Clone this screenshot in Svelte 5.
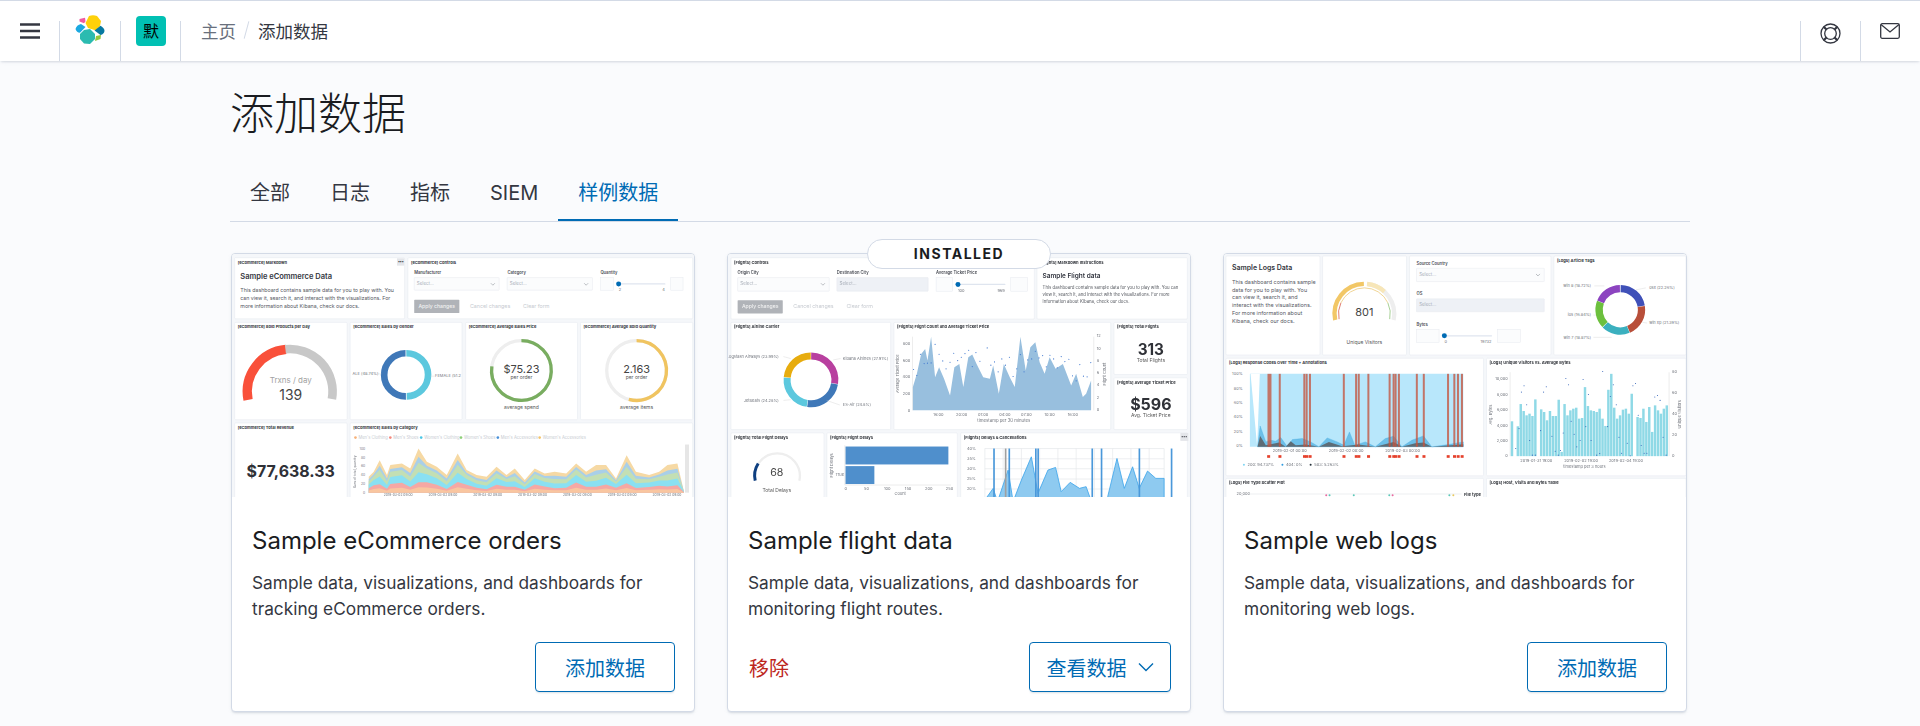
<script>
  const tabs = ['全部', '日志', '指标', 'SIEM', '样例数据'];

  // arc path, angles in degrees clockwise from 12 o'clock
  function arc(cx, cy, r, a0, a1) {
    const p = (a) => {
      const t = ((a - 90) * Math.PI) / 180;
      return `${(cx + r * Math.cos(t)).toFixed(1)} ${(cy + r * Math.sin(t)).toFixed(1)}`;
    };
    return `M${p(a0)}A${r} ${r} 0 ${a1 - a0 > 180 ? 1 : 0} 1 ${p(a1)}`;
  }

  const pts = (list) => list.map((p) => p.join(',')).join(' ');

  // sales by category chart on the ecommerce card
  const salesTop = [[445,950],[460,935],[478,900],[500,945],[510,915],[545,910],[570,925],[595,865],[620,905],[650,920],[680,945],[713,880],[740,930],[770,945],[800,950],[830,920],[860,945],[885,925],[915,960],[945,925],[975,940],[1005,935],[1040,940],[1070,910],[1100,935],[1130,915],[1160,915],[1190,955],[1222,885],[1250,935],[1290,945],[1320,935],[1345,915],[1375,910],[1395,995]];
  const salesBase = 998;
  const layer = (frac, wob) => salesTop.map(([x, y], i) => [x, salesBase - (salesBase - y) * Math.min(1, frac + wob * Math.sin(i * 1.7))]);
  const stacked = (f) => pts([[445, salesBase], ...layer(f[0], f[1]), [1395, salesBase]]);

  const flightArea = [[578,540],[578,470],[590,430],[603,370],[615,355],[622,390],[633,318],[645,440],[657,410],[672,445],[690,495],[703,410],[718,400],[730,470],[745,380],[757,372],[770,400],[790,440],[810,445],[820,405],[837,490],[852,400],[870,440],[885,470],[902,318],[918,420],[932,350],[947,335],[960,395],[975,430],[990,380],[1008,415],[1030,400],[1055,465],[1070,430],[1090,500],[1100,490],[1115,450],[1115,540]];
  const flightDots = [[580,417],[590,435],[601,371],[612,399],[622,398],[633,397],[645,341],[657,371],[668,391],[678,415],[690,395],[701,368],[713,390],[724,380],[735,369],[746,359],[757,408],[768,366],[780,392],[802,352],[813,404],[824,394],[835,424],[846,385],[857,404],[869,380],[880,438],[891,415],[902,372],[913,424],[924,388],[936,385],[947,362],[958,382],[969,375],[980,409],[991,374],[1002,385],[1013,412],[1025,378],[1036,393],[1048,386],[1059,436],[1070,451],[1081,402],[1092,437],[1103,439],[1114,396]];

  const delayArea = [[795,810],[820,775],[833,815],[865,720],[880,815],[905,750],[935,680],[955,790],[985,720],[1008,712],[1025,785],[1052,757],[1080,775],[1100,770],[1118,820],[1145,820],[1165,800],[1193,685],[1215,775],[1240,710],[1260,775],[1285,723],[1310,745],[1335,745],[1335,820]];
  const delayBars = [822, 868, 948, 955, 1118, 1146, 1260, 1357];

  const logBars = [528,0,543,476,497,510,505,512,462,633,492,500,525,497,512,512,463,620,476,510,495,490,487,520,518,425,482,495,497,500,490,520,542,433,385,487,520,510,493,490,505,445,0,515,518,490,530,485,560,480,495,505,490,480];
  const logDots = [[903,610],[913,550],[920,440],[928,421],[936,478],[945,586],[953,630],[962,630],[978,556],[987,440],[995,424],[1012,573],[1022,618],[1031,630],[1038,616],[1046,563],[1054,399],[1062,418],[1070,528],[1079,567],[1087,605],[1097,586],[1106,402],[1114,544],[1122,447],[1130,586],[1147,630],[1156,625],[1165,378],[1180,544],[1188,453],[1197,418],[1206,478],[1214,576],[1222,624],[1239,594],[1248,632],[1256,421],[1264,414],[1272,510],[1281,601],[1290,624],[1298,624],[1322,455],[1330,450],[1338,465],[1347,576],[1356,630]];
  const redBars = [158,192,266,273,283,385,422,430,459,523,535,541,551,605,626,699,718,729,741];
</script>

{#snippet panel(x, y, x2, y2, title)}
  <rect class="panel" x={x} y={y} width={x2 - x} height={y2 - y} rx="3" />
  {#if title}<text class="pt" x={x + 9} y={y + 18}>{title}</text>{/if}
{/snippet}

{#snippet select(x, y, x2, y2, off)}
  <rect class={off ? 'sel off' : 'sel'} x={x} y={y} width={x2 - x} height={y2 - y} rx="1" />
  <text class="ph" x={x + 8} y={y + 23}>Select...</text>
  {#if !off}<path class="chev" d="M{x2 - 25} {y + 17}l6 6 6-6" />{/if}
{/snippet}

{#snippet slider(a, b, y, h, lo, hi, tx, tx2)}
  <rect class="sel" x={a} y={y} width={tx - a - 8} height={h} />
  <rect class="sel" x={tx2 + 16} y={y} width={b - tx2 - 16} height={h} />
  <rect class="track" x={tx} y={y + h / 2 - 2} width={tx2 - tx} height="4" rx="2" />
  <circle class="thumb" cx={tx + 8} cy={y + h / 2} r="7.5" />
  <text class="sm" x={tx + 8} y={y + h + 3}>{lo}</text>
  <text class="sm" x={tx2 - 2} y={y + h + 3} text-anchor="end">{hi}</text>
{/snippet}

{#snippet formBtns(x, y)}
  <rect class="apply" x={x} y={y} width="136" height="40" rx="2" />
  <text class="applyt" x={x + 68} y={y + 25} text-anchor="middle">Apply changes</text>
  <text class="ghost" x={x + 168} y={y + 25}>Cancel changes</text>
  <text class="ghost" x={x + 328} y={y + 25}>Clear form</text>
{/snippet}

<div class="page">
  <header class="topbar">
    <div class="cell menu">
      <svg width="20" height="16" viewBox="0 0 20 16"><path d="M0 1.500h20M0 8h20M0 14.500h20" stroke="#343741" stroke-width="2.400" /></svg>
    </div>
    <div class="cell logo">
      <svg width="32" height="32" viewBox="0 0 32 32">
        <path d="M10.500 9 L14 2 Q18 0.500 22 2 L26 7 L25 12 L21 16.500 L13 14 Z" fill="#fed10a" />
        <path d="M5 20 L9 16 L15 15 L20 20 L20 25 L15 30 L9 29.500 L5 25 Z" fill="#2bbbb0" />
        <path d="M19.500 16.500 L25.500 11.700 Q29.500 14 29.500 17 Q29 20 25.500 21 Z" fill="#0779a1" />
        <path d="M0.500 15 Q1.500 11 6 10 L10.500 13 L5 18.800 Q1.500 18.500 0.500 15 Z" fill="#1ba9e1" />
        <path d="M4.500 5 L10 3.700 L10.500 7.500 L9 9.300 L4.500 7.500 Z" fill="#ef5ba1" />
        <path d="M21 22 L26 21 L25.500 25 L20 27 Z" fill="#93c83e" />
      </svg>
    </div>
    <div class="cell space"><span class="avatar">默</span></div>
    <nav class="crumbs">
      <span class="crumb">主页</span>
      <span class="slash"></span>
      <span class="current">添加数据</span>
    </nav>
    <div class="cell right">
      <svg width="21" height="21" viewBox="0 0 21 21" fill="none" stroke="#343741">
        <circle cx="10.500" cy="10.500" r="9.500" stroke-width="1.300" />
        <circle cx="10.500" cy="10.500" r="5.800" stroke-width="1.300" />
        <path d="M3.700 3.700l3 3M17.300 3.700l-3 3M3.700 17.300l3-3M17.300 17.300l-3-3" stroke-width="2.200" />
      </svg>
    </div>
    <div class="cell right">
      <svg width="20" height="16" viewBox="0 0 20 16" fill="none" stroke="#343741" stroke-width="1.300">
        <rect x="0.700" y="0.700" width="18.600" height="14.600" rx="1.500" />
        <path d="M1 1.500l9 7.500 9-7.500" />
      </svg>
    </div>
  </header>

  <main class="content">
    <h1>添加数据</h1>
    <div class="tabs">
      {#each tabs as tab, i}
        <span class="tab" class:active={i === 4}>{tab}</span>
      {/each}
    </div>

    <div class="cards">
      <article class="card">
        <svg class="thumb-img" viewBox="33 279 1392 732">
          <rect x="33" y="279" width="1392" height="732" fill="#f5f7fa" />
          {@render panel(41, 290, 553, 474, '[eCommerce] Markdown')}
          <rect x="530" y="292" width="22" height="22" fill="#e4e6ea" />
          <text class="pt" x="533" y="305">•••</text>
          <text class="h3" x="58" y="355">Sample eCommerce Data</text>
          <text class="md" x="58" y="393">This dashboard contains sample data for you to play with. You</text>
          <text class="md" x="58" y="417">can view it, search it, and interact with the visualizations. For</text>
          <text class="md" x="58" y="441">more information about Kibana, check our docs.</text>

          {@render panel(563, 290, 1421, 474, '[eCommerce] Controls')}
          <text class="lb" x="582" y="339">Manufacturer</text>
          <text class="lb" x="863" y="339">Category</text>
          <text class="lb" x="1143" y="339">Quantity</text>
          {@render select(582, 350, 838, 388, false)}
          {@render select(862, 350, 1119, 388, false)}
          {@render slider(1144, 1392, 350, 38, '2', '4', 1190, 1339)}
          {@render formBtns(582, 417)}

          {@render panel(41, 485, 380, 778, '[eCommerce] Sold Products per Day')}
          <path d={arc(207, 694, 128, 259, 355)} fill="none" stroke="#f9503a" stroke-width="28" />
          <path d="M194 566 A128 128 0 0 1 334 716" fill="none" stroke="#c8c8c8" stroke-width="26" />
          <text class="mid" x="210" y="667" text-anchor="middle" font-size="24" fill="#a2a2a2">Trxns / day</text>
          <text class="mid" x="210" y="718" text-anchor="middle" font-size="42" fill="#444">139</text>

          {@render panel(389, 485, 726, 778, '[eCommerce] Sales by Gender')}
          <path d={arc(557, 643, 65, 180, 359)} fill="none" stroke="#3f78b8" stroke-width="20" />
          <path d={arc(557, 643, 65, 1, 178)} fill="none" stroke="#5cc8de" stroke-width="20" />
          <text class="sm" x="396" y="643">ALE (48.74%)</text>
          <path class="lead" d="M470 640h14M630 647h14" />
          <text class="sm" x="645" y="650">FEMALE (51.2</text>

          {@render panel(737, 485, 1074, 778, '[eCommerce] Average Sales Price')}
          <circle cx="905" cy="630" r="90" fill="none" stroke="#eeeeee" stroke-width="10" />
          <path d={arc(905, 630, 90, 0, 278)} fill="none" stroke="#79ad60" stroke-width="10" />
          <text class="mid" x="905" y="637" text-anchor="middle" font-size="33" fill="#444">$75.23</text>
          <text class="mid" x="905" y="656" text-anchor="middle" font-size="15" fill="#555">per order</text>
          <text class="mid" x="905" y="746" text-anchor="middle" font-size="15" fill="#555">average spend</text>

          {@render panel(1083, 485, 1421, 778, '[eCommerce] Average Sold Quantity')}
          <circle cx="1252" cy="630" r="90" fill="none" stroke="#eeeeee" stroke-width="10" />
          <path d={arc(1252, 630, 90, 0, 195)} fill="none" stroke="#f0c460" stroke-width="10" />
          <text class="mid" x="1252" y="637" text-anchor="middle" font-size="33" fill="#444">2.163</text>
          <text class="mid" x="1252" y="656" text-anchor="middle" font-size="15" fill="#555">per order</text>
          <text class="mid" x="1252" y="746" text-anchor="middle" font-size="15" fill="#555">average items</text>

          {@render panel(41, 788, 380, 1030, '[eCommerce] Total Revenue')}
          <text class="big" x="210" y="950" text-anchor="middle" font-size="48">$77,638.33</text>

          {@render panel(389, 788, 1421, 1030, '[eCommerce] Sales by Category')}
          {#each [[405, "Men's Clothing", '#f7b27a'], [510, "Men's Shoes", '#f58a80'], [603, "Women's Clothing", '#4cc7e6'], [723, "Women's Shoes", '#8ed07a'], [834, "Men's Accessories", '#4a90d8'], [960, "Women's Accessories", '#f4c46c']] as [x, name, c]}
            <circle cx={x} cy="832" r="4" fill={c} />
            <text class="legend" x={x + 9} y="836">{name}</text>
          {/each}
          {#each ['100', '80', '60', '40', '20', '0'] as v, i}
            <text class="sm tiny" x="434" y={869 + i * 26.500} text-anchor="end">{v}</text>
          {/each}
          <text class="sm tiny" transform="translate(406 985) rotate(-90)">Sum of total_quantity</text>
          <polygon points={stacked([1, 0])} fill="#f6d9a4" />
          <polygon points={stacked([0.84, 0.04])} fill="#a9cfe8" />
          <polygon points={stacked([0.72, 0.07])} fill="#c3dfb4" />
          <polygon points={stacked([0.52, 0.09])} fill="#8ae0f2" />
          <polygon points={stacked([0.28, 0.07])} fill="#f5a8a4" />
          <polygon points={stacked([0.14, 0.03])} fill="#f9c6a0" />
          <rect x="1398" y="853" width="12" height="145" fill="#e6e6e6" />
          {#each [490, 625, 760, 895, 1030, 1165, 1300] as x}
            <text class="sm tiny" x={x} y="1009">2019-03-02 09:00</text>
          {/each}
        </svg>
        <div class="body">
          <h2>Sample eCommerce orders</h2>
          <p>Sample data, visualizations, and dashboards for tracking eCommerce orders.</p>
        </div>
        <div class="actions">
          <button class="btn wide">添加数据</button>
        </div>
      </article>

      <article class="card">
        <span class="badge">INSTALLED</span>
        <svg class="thumb-img" viewBox="21 69 1392 732">
          <rect x="21" y="69" width="1392" height="732" fill="#f5f7fa" />
          {@render panel(30, 80, 944, 265, '[Flights] Controls')}
          <text class="lb" x="50" y="130">Origin City</text>
          <text class="lb" x="349" y="130">Destination City</text>
          <text class="lb" x="648" y="130">Average Ticket Price</text>
          {@render select(50, 140, 326, 181, false)}
          {@render select(349, 140, 624, 181, true)}
          {@render slider(648, 923, 140, 41, '100', '969', 706, 857)}
          {@render formBtns(50, 208)}

          {@render panel(952, 80, 1405, 265, '')}
          <text class="pt" x="961" y="99">[Flights] Markdown Instructions</text>
          <text class="h3 flights" x="969" y="142">Sample Flight data</text>
          <text class="md flights" x="969" y="175">This dashboard contains sample data for you to play with. You can</text>
          <text class="md flights" x="969" y="195">view it, search it, and interact with the visualizations. For more</text>
          <text class="md flights" x="969" y="216">information about Kibana, check our docs.</text>

          {@render panel(30, 275, 511, 598, '[Flights] Airline Carrier')}
          <path d={arc(271, 448, 72, 0.5, 99)} fill="none" stroke="#b8409f" stroke-width="21" />
          <path d={arc(271, 448, 72, 100, 188)} fill="none" stroke="#3f78b8" stroke-width="21" />
          <path d={arc(271, 448, 72, 189, 275)} fill="none" stroke="#5cc8de" stroke-width="21" />
          <path d={arc(271, 448, 72, 276, 359.500)} fill="none" stroke="#e7ac0e" stroke-width="21" />
          <path class="lead" d="M338 388l22-4M210 384l-22-6M210 508l-22 2M318 510l40 14" />
          <text class="sm" x="174" y="382" text-anchor="end">Logstash Airways (23.99%)</text>
          <text class="sm" x="367" y="388">Kibana Airlines (27.91%)</text>
          <text class="sm" x="174" y="514" text-anchor="end">JetBeats (24.28%)</text>
          <text class="sm" x="367" y="528">ES-Air (24.8%)</text>

          {@render panel(521, 275, 1174, 598, '[Flights] Flight Count and Average Ticket Price')}
          {#each [['800', 341], ['600', 391], ['400', 441], ['200', 491], ['0', 541]] as [v, y]}
            <text class="sm" x="570" y={y + 3} text-anchor="end">{v}</text>
          {/each}
          {#each [['12', 319], ['10', 357], ['8', 394], ['6', 431], ['4', 468], ['2', 505], ['0', 543]] as [v, y]}
            <text class="sm" x="1132" y={y}>{v}</text>
          {/each}
          <text class="sm" transform="translate(537 488) rotate(-90)">Average Ticket Price</text>
          <text class="sm" transform="translate(1161 465) rotate(-90)">Flight Count</text>
          <path class="lead" d="M577 318v222M1123 318v222" stroke-width="2" />
          <polygon points={pts(flightArea)} fill="#98bfde" />
          {#each flightDots as [x, y]}
            <circle cx={x} cy={y} r="1.800" fill="#4178d0" />
          {/each}
          {#each [[655, '16:00'], [725, '20:00'], [790, '01:00'], [855, '04:00'], [920, '07:00'], [990, '10:00'], [1060, '16:00']] as [x, v]}
            <text class="sm" x={x} y="556" text-anchor="middle">{v}</text>
          {/each}
          <text class="sm wide-label" x="852" y="575" text-anchor="middle">timestamp per 30 minutes</text>

          {@render panel(1184, 275, 1405, 432, '[Flights] Total Flights')}
          <text class="big" x="1295" y="374" text-anchor="middle" font-size="46">313</text>
          <text class="mid" x="1295" y="394" text-anchor="middle" font-size="15" fill="#555">Total Flights</text>
          {@render panel(1184, 442, 1405, 598, '[Flights] Average Ticket Price')}
          <text class="big" x="1295" y="540" text-anchor="middle" font-size="48">$596</text>
          <text class="mid" x="1295" y="560" text-anchor="middle" font-size="15" fill="#555">Avg. Ticket Price</text>

          {@render panel(30, 608, 310, 820, '[Flights] Total Flight Delays')}
          <path d="M103 752 A68 68 0 1 1 236 752" fill="none" stroke="#eeeeee" stroke-width="7" />
          <path d="M103 752 A68 68 0 0 1 112 700" fill="none" stroke="#0e3f80" stroke-width="9" />
          <text class="mid" x="168" y="738" text-anchor="middle" font-size="32" fill="#444">68</text>
          <text class="mid" x="168" y="786" text-anchor="middle" font-size="15" fill="#555">Total Delays</text>

          {@render panel(319, 608, 712, 820, '[Flights] Flight Delays')}
          <rect x="375" y="649" width="310" height="54" fill="#4f8fcc" />
          <rect x="375" y="708" width="87" height="54" fill="#4f8fcc" />
          <path class="lead" d="M373 645v120h320" />
          <text class="sm" transform="translate(336 742) rotate(-90)">Flight Delays</text>
          <text class="sm" x="345" y="738">True</text>
          {#each [0, 50, 100, 150, 200, 250] as v, i}
            <text class="sm" x={376 + i * 62.500} y="780" text-anchor="middle">{v}</text>
          {/each}
          <text class="sm" x="540" y="796" text-anchor="middle">Count</text>

          {@render panel(722, 608, 1405, 820, '[Flights] Delays & Cancellations')}
          <rect x="1384" y="608" width="24" height="24" fill="#e4e6ea" />
          <text class="pt" x="1387" y="622">•••</text>
          {#each [['40%', 655], ['35%', 686], ['30%', 716], ['25%', 747], ['20%', 777]] as [v, y]}
            <text class="sm" x="741" y={y + 4}>{v}</text>
            <path class="grid" d="M795 {y}H1335" />
          {/each}
          {#each [795, 850, 905, 960, 1015, 1070, 1125, 1180, 1235, 1290, 1335] as x}
            <path class="grid" d="M{x} 655V810" />
          {/each}
          <polygon points={pts(delayArea)} fill="#8ecaf0" stroke="#3fa6ea" stroke-width="2.500" />
          <rect x="855" y="655" width="5" height="160" fill="#a0a0a0" />
          {#each delayBars as x}
            <rect x={x - 2} y="655" width="5" height="160" fill="#4a98da" />
          {/each}
        </svg>
        <div class="body">
          <h2>Sample flight data</h2>
          <p>Sample data, visualizations, and dashboards for monitoring flight routes.</p>
        </div>
        <div class="actions">
          <span class="remove">移除</span>
          <button class="btn">查看数据
            <svg class="caret" width="16" height="10" viewBox="0 0 16 10"><path d="M1 1.500l7 7 7-7" fill="none" stroke="#006bb4" stroke-width="1.400" /></svg>
          </button>
        </div>
      </article>

      <article class="card">
        <svg class="thumb-img" viewBox="24 24 1392 732">
          <rect x="24" y="24" width="1392" height="732" fill="#f5f7fa" />
          {@render panel(30, 30, 313, 328, '')}
          <text class="h3 logs" x="48" y="72">Sample Logs Data</text>
          {#each ['This dashboard contains sample', 'data for you to play with. You', 'can view it, search it, and', 'interact with the visualizations.', 'For more information about', 'Kibana, check our docs.'] as line, i}
            <text class="md logs" x="48" y={113 + i * 24}>{line}</text>
          {/each}

          {@render panel(321, 30, 574, 328, '')}
          <path d={arc(447, 204, 90, 258, 359)} fill="none" stroke="#f2c766" stroke-width="13" />
          <path d={arc(447, 204, 90, 8, 102)} fill="none" stroke="#eeeeee" stroke-width="13" />
          <path d={arc(447, 204, 90, 5, 42)} fill="none" stroke="#f7e6b8" stroke-width="13" />
          <path d={arc(447, 204, 78, 258, 295)} fill="none" stroke="#d0402c" stroke-width="2" />
          <path d={arc(447, 204, 78, 295, 65)} fill="none" stroke="#e8c060" stroke-width="2" />
          <path d={arc(447, 204, 78, 65, 102)} fill="none" stroke="#7ab860" stroke-width="2" />
          <text class="mid" x="447" y="212" text-anchor="middle" font-size="33" fill="#444">801</text>
          <text class="mid" x="447" y="296" text-anchor="middle" font-size="15" fill="#555">Unique Visitors</text>

          {@render panel(583, 30, 1009, 328, '')}
          <text class="lb" x="604" y="57">Source Country</text>
          {@render select(604, 67, 989, 107, false)}
          <text class="lb" x="604" y="148">OS</text>
          {@render select(604, 159, 989, 198, true)}
          <text class="lb" x="604" y="240">Bytes</text>
          {@render slider(604, 917, 251, 39, '0', '19732', 680, 832)}

          {@render panel(1018, 30, 1416, 328, '[Logs] Article Tags')}
          <path d={arc(1218, 192, 64, 1, 80)} fill="none" stroke="#3f50b8" stroke-width="22" />
          <path d={arc(1218, 192, 64, 81, 157)} fill="none" stroke="#b84f3a" stroke-width="22" />
          <path d={arc(1218, 192, 64, 158, 225)} fill="none" stroke="#3bb0bf" stroke-width="22" />
          <path d={arc(1218, 192, 64, 226, 291)} fill="none" stroke="#6cc03e" stroke-width="22" />
          <path d={arc(1218, 192, 64, 292, 359)} fill="none" stroke="#8c44c0" stroke-width="22" />
          <path class="lead" d="M1265 132l30-6M1285 230l14 2M1192 275h-55M1137 208h8M1170 120h-30" />
          <text class="sm" x="1130" y="123" text-anchor="end">win 8 (18.72%)</text>
          <text class="sm" x="1305" y="128">osx (22.26%)</text>
          <text class="sm" x="1130" y="212" text-anchor="end">ios (16.84%)</text>
          <text class="sm" x="1305" y="235">win xp (21.39%)</text>
          <text class="sm" x="1130" y="279" text-anchor="end">win 7 (18.87%)</text>

          {@render panel(30, 338, 806, 692, '[Logs] Response Codes Over Time + Annotations')}
          {#each ['100%', '80%', '60%', '40%', '20%', '0%'] as v, i}
            <text class="sm" x="80" y={389 + i * 43.500} text-anchor="end">{v}</text>
          {/each}
          <polygon points="102,385 745,385 745,605 102,605" fill="#b8e7fb" />
          <polygon points="104,385 132,385 124,605" fill="#ffffff" />
          <polygon points="125,605 133,542 150,590 165,585 180,588 195,577 215,605 230,583 260,580 285,590 310,605 335,578 365,590 385,600 402,560 418,600 450,590 480,605 510,580 535,573 560,605 590,585 625,572 650,605 700,598 745,590 745,605" fill="#6cbfe8" stroke="#3fa8e0" />
          <polygon points="125,605 133,572 150,600 190,592 210,605 225,588 240,600 270,598 310,605 340,590 380,603 430,598 480,605 535,590 560,605 600,594 625,592 650,605 745,597 745,605" fill="#5d6c76" />
          {#each redBars as x}
            <rect x={x - 3} y="385" width={x === 158 ? 12 : 6} height="220" fill="#c4553f" opacity="0.78" />
            <rect x={x - 4} y="630" width="9" height="8" fill="#e5412c" />
          {/each}
          {#each ['2019-02-01 00:00', '2019-02-02 00:00', '2019-02-03 00:00'] as v, i}
            <text class="sm" x={222 + i * 170} y="621" text-anchor="middle">{v}</text>
          {/each}
          {#each [[84, '#7fd4f4', '200: 94.737%'], [200, '#2f9be0', '404: 0%'], [285, '#26323a', '503: 5.263%']] as [x, c, v]}
            <circle cx={x} cy="659" r="3" fill={c} />
            <text class="sm" x={x + 11} y="663">{v}</text>
          {/each}

          {@render panel(815, 338, 1416, 692, '[Logs] Unique Visitors vs. Average Bytes')}
          {#each [['10,000', 402], ['8,000', 449], ['6,000', 495], ['4,000', 541], ['2,000', 587], ['0', 633]] as [v, y]}
            <text class="sm" x="879" y={y + 3} text-anchor="end">{v}</text>
          {/each}
          {#each [['80', 381], ['60', 444], ['40', 507], ['20', 570], ['0', 633]] as [v, y]}
            <text class="sm" x="1374" y={y + 3}>{v}</text>
          {/each}
          <text class="sm" transform="translate(832 538) rotate(-90)">Avg. Bytes</text>
          <text class="sm" transform="translate(1402 550) rotate(-90)">Unique Visitors</text>
          <path class="lead" d="M886 380v253M1365 380v253" stroke-width="3" />
          {#each logBars as top, i}
            {#if top}<rect x={888 + i * 8.800} y={top} width="7.400" height={633 - top} fill="#8fd9e6" />{/if}
          {/each}
          {#each logDots as [x, y]}
            <circle cx={x} cy={y} r="1.600" fill="#3060b8" />
          {/each}
          {#each [[965, '2019-01-31 19:00'], [1100, '2019-02-02 19:00'], [1235, '2019-02-04 19:00']] as [x, v]}
            <text class="sm" x={x} y="650" text-anchor="middle">{v}</text>
          {/each}
          <text class="sm" x="1110" y="668" text-anchor="middle">timestamp per 3 hours</text>

          {@render panel(30, 700, 806, 780, '[Logs] File Type Scatter Plot')}
          <text class="sm" x="62" y="749">20,000</text>
          <path class="grid" d="M100 747H740" />
          {#each [[332, '#e86aa0'], [342, '#5cc8b8'], [415, '#5cc8b8'], [522, '#5cc8b8'], [532, '#e86aa0'], [703, '#5cc8b8'], [715, '#e8c860']] as [x, c]}
            <circle cx={x} cy="751" r="3" fill={c} />
          {/each}
          <text class="pt" x="747" y="753">File type</text>
          {@render panel(815, 700, 1416, 780, '[Logs] Host, Visits and Bytes Table')}
        </svg>
        <div class="body">
          <h2>Sample web logs</h2>
          <p>Sample data, visualizations, and dashboards for monitoring web logs.</p>
        </div>
        <div class="actions">
          <button class="btn wide">添加数据</button>
        </div>
      </article>
    </div>
  </main>
</div>

<style>
  :global(body) {
    background: #fafbfd;
  }
  .page {
    height: 726px;
    overflow: hidden;
    font-family: Inter, "Noto Sans CJK SC", sans-serif;
    color: #343741;
  }
  .topbar {
    display: flex;
    height: 58px;
    padding-top: 2px;
    background: #fff;
    border-top: 1px solid #d3dae6;
    box-shadow: 0 2px 2px -1px rgba(152, 162, 179, 0.3), 0 1px 5px -2px rgba(152, 162, 179, 0.3);
    position: relative;
  }
  .cell {
    display: flex;
    justify-content: center;
    padding-top: 20px;
    position: relative;
  }
  .cell::after {
    content: "";
    position: absolute;
    right: 0;
    top: 18px;
    bottom: 0;
    width: 1px;
    background: #d3dae6;
  }
  .menu {
    width: 60px;
  }
  .logo {
    width: 61px;
    padding-top: 11px;
  }
  .space {
    width: 60px;
    padding-top: 13px;
  }
  .right {
    width: 60px;
  }
  .right::after {
    left: 0;
    right: auto;
  }
  .avatar {
    width: 30px;
    height: 30px;
    border-radius: 4px;
    background: #01c0b3;
    color: #000;
    font-size: 16px;
    line-height: 30px;
    text-align: center;
  }
  .crumbs {
    flex: 1;
    display: flex;
    align-items: center;
    height: 58px;
    margin-top: -2px;
    padding: 0 0 5px 20px;
    font-size: 17.500px;
  }
  .crumb {
    color: #69707d;
  }
  .slash {
    width: 1px;
    height: 18px;
    margin: 0 11px 0 10px;
    background: #d3dae6;
    transform: rotate(15deg);
  }
  .content {
    width: 1460px;
    margin-left: 230px;
  }
  h1 {
    margin: 0;
    padding-top: 26px;
    font-size: 44px;
    font-weight: 300;
    line-height: 54px;
    color: #1a1c21;
  }
  .tabs {
    display: flex;
    margin-top: 32px;
    border-bottom: 1px solid #d3dae6;
  }
  .tab {
    padding: 0 20px;
    height: 48px;
    line-height: 40px;
    font-size: 20px;
    color: #343741;
    box-sizing: border-box;
  }
  .active {
    color: #006bb4;
    border-bottom: 2px solid #006bb4;
    margin-bottom: -1px;
  }
  .cards {
    display: grid;
    grid-template-columns: repeat(3, 464px);
    gap: 32px;
    margin: 31px 0 0 1px;
  }
  .card {
    position: relative;
    display: flex;
    flex-direction: column;
    height: 459px;
    box-sizing: border-box;
    background: #fff;
    border: 1px solid #d3dae6;
    border-radius: 4px;
    box-shadow: 0 2px 2px -1px rgba(152, 162, 179, 0.3), 0 1px 5px -2px rgba(152, 162, 179, 0.3);
  }
  .thumb-img {
    display: block;
    width: 462px;
    height: 243px;
    flex: none;
    filter: blur(0.35px);
    border-radius: 3px 3px 0 0;
  }
  .panel {
    fill: #fff;
    stroke: #e4e8ef;
    stroke-width: 1.500;
  }
  text {
    font-family: Inter, sans-serif;
  }
  .pt {
    font-size: 12.300px;
    font-weight: 700;
    fill: #33363c;
  }
  .h3 {
    font-size: 22.700px;
    font-weight: 600;
    fill: #343741;
  }
  .h3.flights {
    font-size: 19.500px;
  }
  .h3.logs {
    font-size: 21px;
  }
  .md {
    font-size: 15.800px;
    fill: #55585f;
  }
  .md.flights {
    font-size: 13.100px;
  }
  .md.logs {
    font-size: 16.500px;
  }
  .lb {
    font-size: 12.400px;
    font-weight: 600;
    fill: #4a4d55;
  }
  .ph {
    font-size: 13.500px;
    fill: #a8aeb8;
  }
  .sm {
    font-size: 12px;
    fill: #70747c;
  }
  .tiny {
    font-size: 10px;
  }
  .wide-label {
    font-size: 13px;
  }
  .legend {
    font-size: 12.400px;
    fill: #c6cad0;
  }
  .sel {
    fill: #fbfcfd;
    stroke: #e6e9ef;
    stroke-width: 1.500;
  }
  .off {
    fill: #eef1f6;
  }
  .chev {
    fill: none;
    stroke: #7a7f88;
    stroke-width: 1.500;
  }
  .track {
    fill: #dfe5ef;
  }
  .thumb {
    fill: #006bb4;
  }
  .apply {
    fill: #b0b3b8;
  }
  .applyt {
    font-size: 15.500px;
    font-weight: 500;
    fill: #f2f2f2;
  }
  .ghost {
    font-size: 16px;
    fill: #c6cad0;
  }
  .big {
    font-weight: 700;
    fill: #2f3137;
  }
  .lead {
    fill: none;
    stroke: #c8c8c8;
    stroke-width: 1;
  }
  .grid {
    fill: none;
    stroke: #e4e6ea;
    stroke-width: 2;
  }
  .badge {
    position: absolute;
    z-index: 2;
    left: 139px;
    top: -15px;
    width: 184px;
    height: 30px;
    box-sizing: border-box;
    border: 1px solid #d3dae6;
    border-radius: 15px;
    background: #fff;
    color: #1a1c21;
    font-size: 14px;
    font-weight: 700;
    letter-spacing: 1.500px;
    line-height: 27px;
    text-align: center;
  }
  .body {
    padding: 26px 20px 0;
  }
  h2 {
    margin: 0;
    font-size: 24px;
    font-weight: 400;
    line-height: 36px;
    color: #1a1c21;
  }
  p {
    margin: 11px 0 0;
    font-size: 17.300px;
    line-height: 26px;
    color: #343741;
  }
  .actions {
    display: flex;
    justify-content: space-between;
    align-items: center;
    margin-top: auto;
    padding: 0 19px 19px 21px;
  }
  .actions:has(> .wide) {
    justify-content: flex-end;
  }
  .remove {
    color: #bd271e;
    font-size: 20px;
  }
  .btn {
    display: flex;
    align-items: center;
    justify-content: center;
    gap: 11px;
    width: 142px;
    height: 50px;
    box-sizing: border-box;
    border: 1px solid #006bb4;
    border-radius: 4px;
    background: #fff;
    color: #006bb4;
    font: inherit;
    font-size: 20px;
    box-shadow: 0 2px 2px -1px rgba(54, 97, 126, 0.2);
  }
  .wide {
    width: 140px;
  }
</style>
